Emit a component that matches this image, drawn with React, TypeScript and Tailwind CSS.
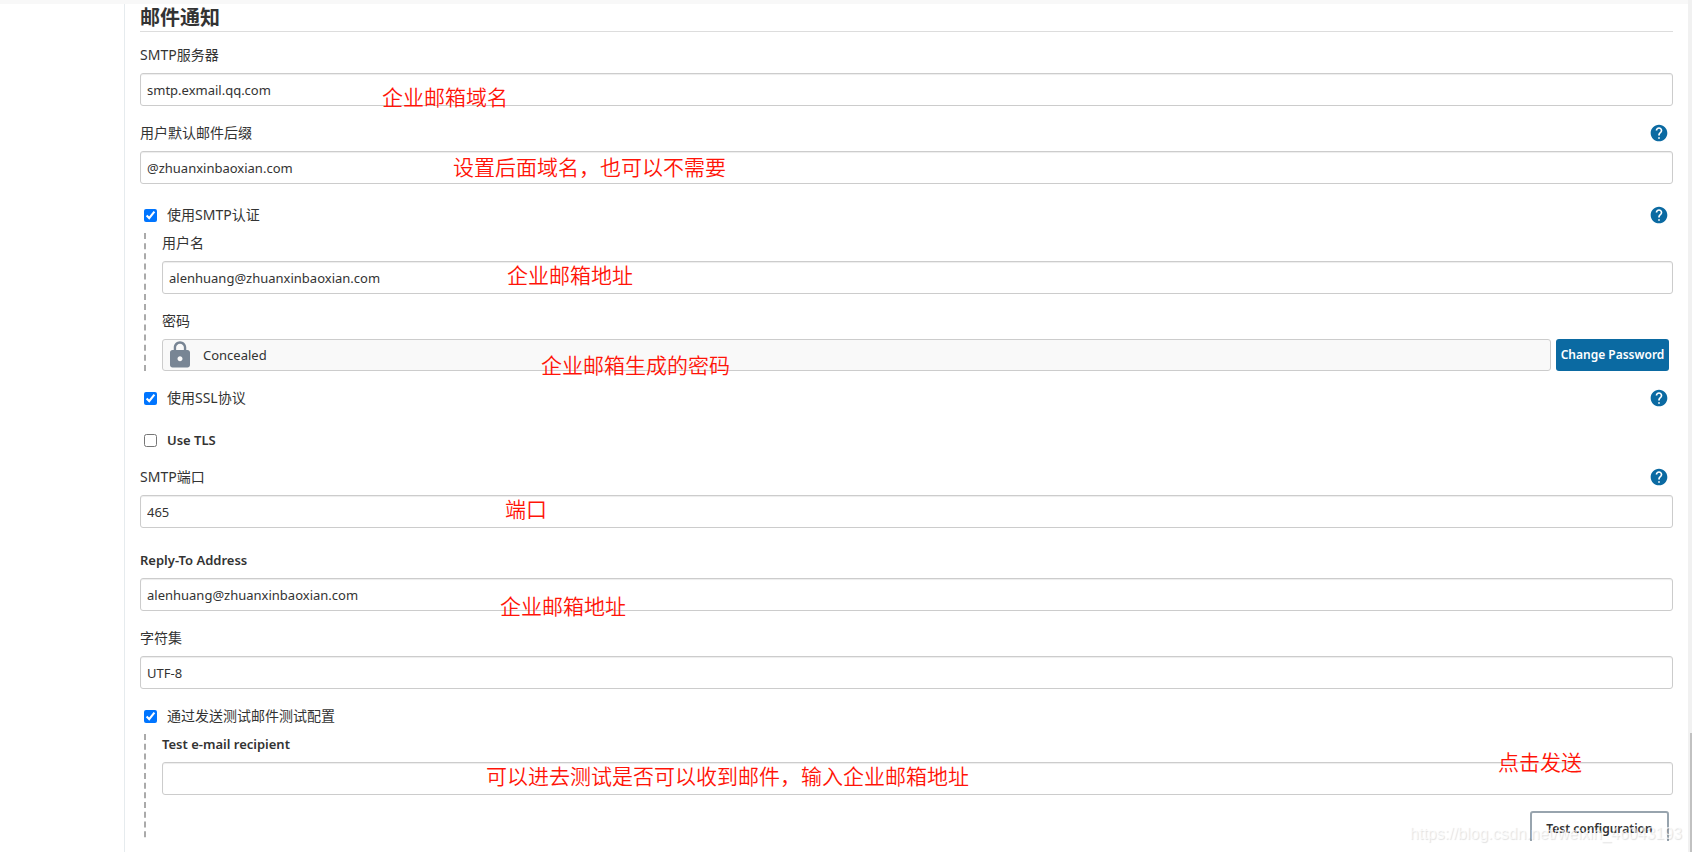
import React, { useState } from 'react';
import { MdHelp, MdLock } from 'react-icons/md';
import clsx from 'clsx';

const HelpLink = ({ topic }: { topic: string }) => (
  <a href="#help" aria-label={`Help: ${topic}`} className="mr-1 text-[#0b6aa2]">
    <MdHelp size={20} />
  </a>
);

// Red remark laid over the form
const Note = ({ className, children }: { className: string; children: React.ReactNode }) => (
  <span
    className={clsx(
      'pointer-events-none absolute whitespace-nowrap text-[21px] leading-6 font-[350] text-[#ff1408]',
      className
    )}
  >
    {children}
  </span>
);

type FieldProps = {
  id: string;
  label: string;
  value: string;
  bold?: boolean;
  help?: boolean;
  className?: string;
  children?: React.ReactNode;
};

const Field = ({ id, label, value, bold, help, className, children }: FieldProps) => {
  const [text, setText] = useState(value);
  return (
    <div className={className}>
      <div className="mb-2 flex h-5 items-center justify-between">
        <label htmlFor={id} className={bold ? 'text-[13px] font-semibold' : ''}>{label}</label>
        {help && <HelpLink topic={label} />}
      </div>
      <div className="relative">
        <input
          id={id}
          type="text"
          value={text}
          onChange={(e) => setText(e.target.value)}
          className="block h-[33px] w-full rounded-[3px] border border-[#ccc] bg-white px-1.5 text-[13px] shadow-[inset_0_1px_1px_rgba(0,0,0,0.075)] outline-none"
        />
        {children}
      </div>
    </div>
  );
};

type CheckProps = {
  id: string;
  label: string;
  checked?: boolean;
  bold?: boolean;
  help?: boolean;
  className?: string;
};

const Check = ({ id, label, checked = false, bold, help, className }: CheckProps) => (
  <div className={clsx('flex h-5 items-center justify-between', className)}>
    <div className="flex items-center pl-1">
      <input id={id} type="checkbox" defaultChecked={checked} className="mr-2.5 size-[13px]" />
      <label htmlFor={id} className={bold ? 'text-[13px] font-semibold' : ''}>{label}</label>
    </div>
    {help && <HelpLink topic={label} />}
  </div>
);

const Nested = ({ children }: { children: React.ReactNode }) => (
  <div className="mt-2 ml-1 border-l-2 border-dashed border-[#aaa] pl-4">{children}</div>
);

export default function App() {
  return (
    <div className="relative flex h-screen overflow-hidden bg-white font-['Noto_Sans','Noto_Sans_CJK_SC',sans-serif] text-[14px] leading-5 text-[#333]">
      <div className="flex min-w-0 flex-1 flex-col">
        <div className="h-1 shrink-0 bg-[#f8f8f8]" />
        <main className="ml-[124px] flex min-h-0 flex-1 flex-col border-l border-[#e6ebee] pr-[15px] pb-[11px] pl-[15px]">
          <form className="min-h-0 flex-1 overflow-hidden" onSubmit={(e) => e.preventDefault()}>
            <h1 className="mb-[13px] border-b border-[#ddd] text-[20px] leading-[27px] font-bold">邮件通知</h1>

            <Field id="smtp" label="SMTP服务器" value="smtp.exmail.qq.com">
              <Note className="top-3 left-[242px]">企业邮箱域名</Note>
            </Field>
            <Field id="suffix" label="用户默认邮件后缀" value="@zhuanxinbaoxian.com" help className="mt-[17px]">
              <Note className="top-1 left-[313px]">设置后面域名，也可以不需要</Note>
            </Field>

            <Check id="auth" label="使用SMTP认证" checked help className="mt-[21px]" />
            <Nested>
              <Field id="user" label="用户名" value="alenhuang@zhuanxinbaoxian.com">
                <Note className="top-0.5 left-[345px]">企业邮箱地址</Note>
              </Field>
              <div className="mt-[17px]">
                <div className="mb-2 h-5">密码</div>
                <div className="relative flex items-center gap-[5px] pr-1">
                  <div className="flex h-8 flex-1 items-center rounded-[3px] border border-[#ccc] bg-[#f9f9f9] pl-0.5 text-[13px]">
                    <MdLock size={30} className="mr-2 text-[#788594]" />
                    Concealed
                  </div>
                  <button
                    type="button"
                    className="h-8 w-[113px] rounded-[3px] bg-[#0b6aa2] text-[12px] font-semibold whitespace-nowrap text-white"
                  >
                    Change Password
                  </button>
                  <Note className="top-3.5 left-[379px]">企业邮箱生成的密码</Note>
                </div>
              </div>
            </Nested>

            <Check id="ssl" label="使用SSL协议" checked help className="mt-[17px]" />
            <Check id="tls" label="Use TLS" bold className="mt-[22px]" />

            <Field id="port" label="SMTP端口" value="465" help className="mt-[17px]">
              <Note className="top-0.5 left-[365px]">端口</Note>
            </Field>
            <Field id="reply" label="Reply-To Address" value="alenhuang@zhuanxinbaoxian.com" bold className="mt-[22px]">
              <Note className="top-4 left-[360px]">企业邮箱地址</Note>
            </Field>
            <Field id="charset" label="字符集" value="UTF-8" className="mt-[17px]" />

            <Check id="test" label="通过发送测试邮件测试配置" checked className="mt-[17px]" />
            <Nested>
              <Field id="recipient" label="Test e-mail recipient" value="" bold>
                <Note className="top-0.5 left-[324px]">可以进去测试是否可以收到邮件，输入企业邮箱地址</Note>
                <Note className="-top-3 right-[91px]">点击发送</Note>
              </Field>
              <div className="mt-4 flex justify-end pr-1">
                <button
                  type="submit"
                  className="h-9 w-[139px] rounded-[3px] border-2 border-[#98a4ae] bg-white text-[12px] font-semibold whitespace-nowrap"
                >
                  Test configuration
                </button>
              </div>
            </Nested>
          </form>
        </main>
      </div>

      {/* scrollbar track and thumb */}
      <div className="flex w-1 flex-col items-end justify-end bg-[#f1f1f1]">
        <div className="h-[14%] w-0.5 bg-[#c1c1c1]" />
      </div>

      <span className="pointer-events-none absolute right-2.5 bottom-2 font-['Liberation_Sans',sans-serif] text-[16px] text-white/70 [text-shadow:1px_1px_1px_rgba(0,0,0,0.12)]">
        https://blog.csdn.net/weixin_46043193
      </span>
    </div>
  );
}
